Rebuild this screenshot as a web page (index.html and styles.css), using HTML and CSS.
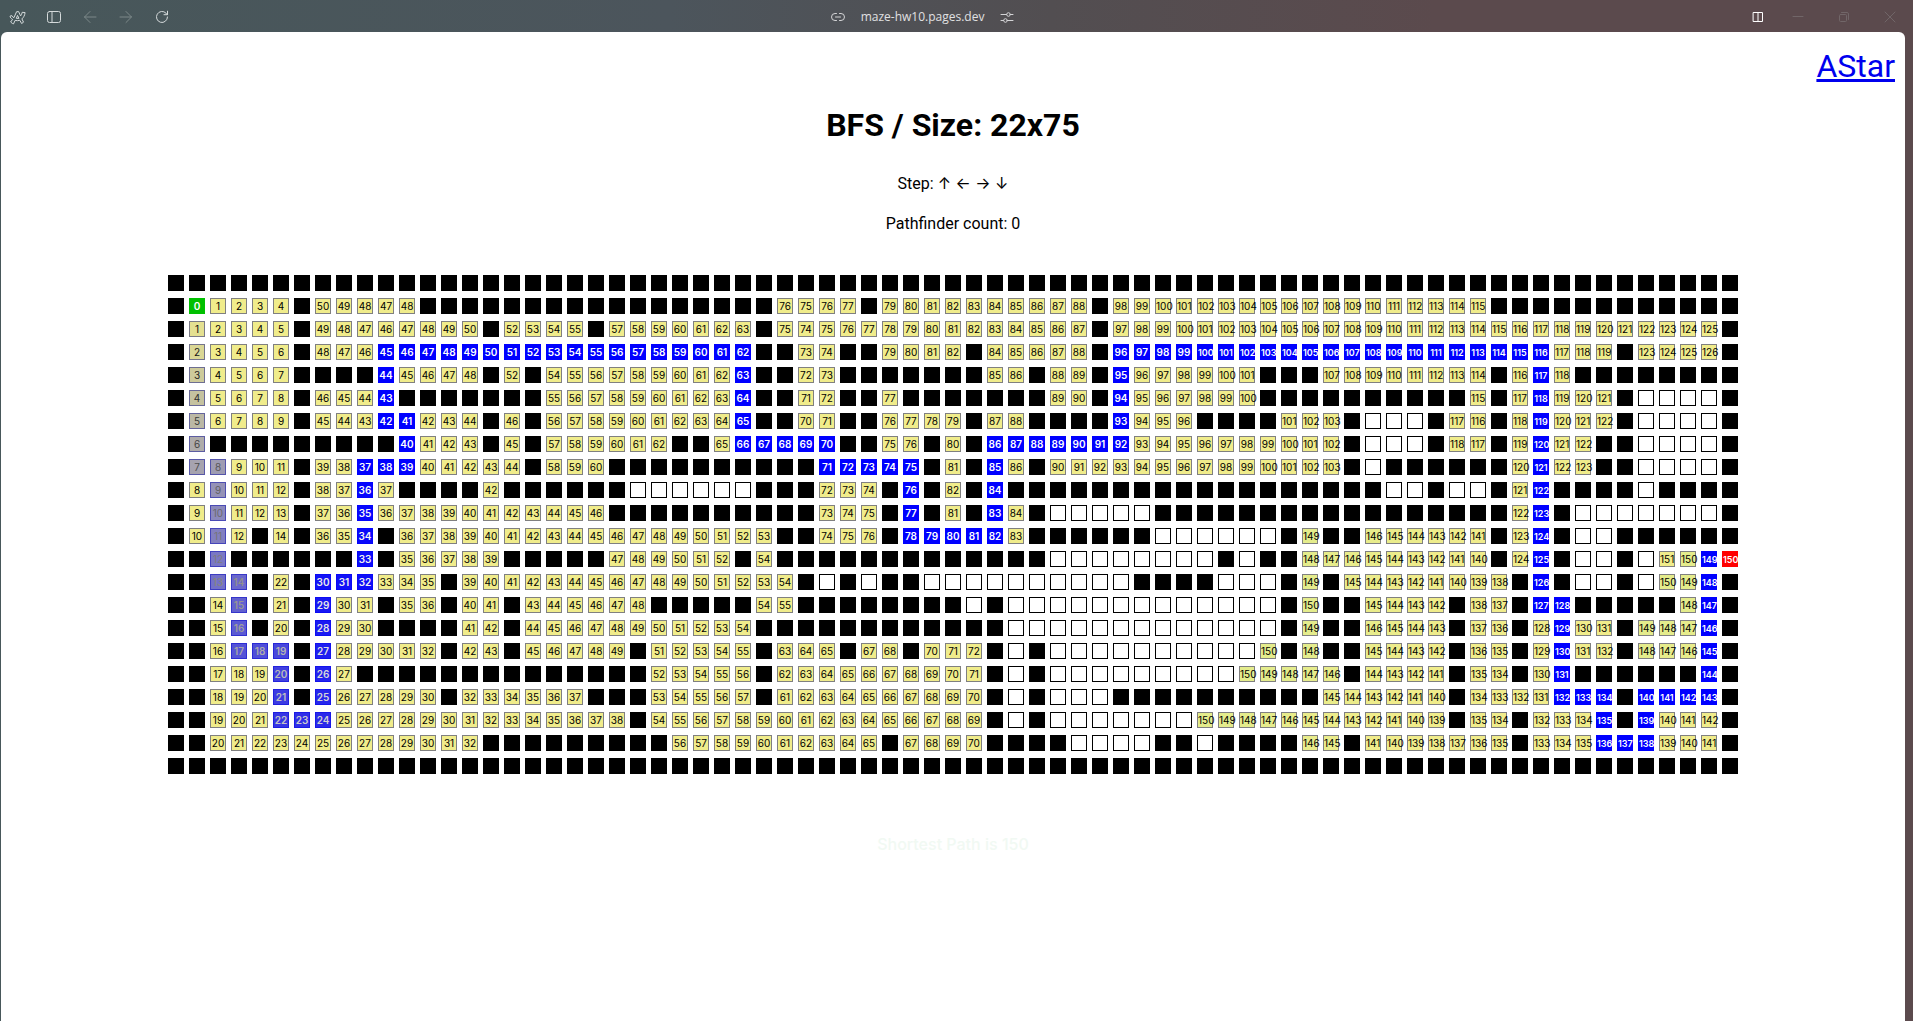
FILE: index.html
```html
<!DOCTYPE html>
<html lang="en">
<head>
<meta charset="utf-8">
<title>BFS Maze</title>
<link rel="stylesheet" href="styles.css">
</head>
<body>
<header class="bar">
  <div class="bar-left">
    <button class="tool" type="button" aria-label="Arc menu">
      <svg width="18" height="16" viewBox="0 0 18 16"><path d="M3.2 14.3 1.6 13l2-2.6C2.300 9.700 1.200 8.600 1 7.200l1.800-.6c.5 1 1.200 1.700 2.100 2.100L7.600 2.700l2-.1 2 4.300c.8-.8 1.300-2 1.600-3.600l2.900.3c-.4 2.800-1.500 4.900-3.200 6.300l1.600 3.300-1.900 1.300-1.800-3.200c-1.600.5-3.200.5-4.700.1L4.700 14.500zM7.500 9l1-2.600L9.800 9z"/></svg>
    </button>
    <button class="tool" type="button" aria-label="Toggle sidebar">
      <svg width="16" height="16" viewBox="0 0 16 16"><rect x="1.500" y="2.500" width="13" height="11" rx="2"/><path d="M6 2.500v11"/></svg>
    </button>
    <button class="tool faded" type="button" aria-label="Back">
      <svg width="16" height="16" viewBox="0 0 16 16"><path d="M14 8H2.500M8 2.500 2.500 8 8 13.500"/></svg>
    </button>
    <button class="tool faded" type="button" aria-label="Forward">
      <svg width="16" height="16" viewBox="0 0 16 16"><path d="M2 8h11.500M8 2.500 13.500 8 8 13.500"/></svg>
    </button>
    <button class="tool" type="button" aria-label="Reload">
      <svg width="16" height="16" viewBox="0 0 16 16"><path d="M13.500 8A5.500 5.500 0 1 1 12 4.200l1.500 1.500M13.500 2.200v3.500H10"/></svg>
    </button>
  </div>
  <div class="address">
    <svg width="14" height="14" viewBox="0 0 14 14"><path d="M5.500 3.500H4a3 3 0 0 0 0 7h1.500M8.500 3.500H10a3 3 0 0 1 0 7H8.500M4.500 7h5"/></svg>
    <span class="url">maze-hw10.pages.dev</span>
    <svg width="14" height="14" viewBox="0 0 14 14"><path d="M1 4.500h5.500M10.500 4.500H13M1 10.500h2.500M7.500 10.500H13"/><circle cx="8.500" cy="4.500" r="1.800"/><circle cx="5.500" cy="10.500" r="1.800"/></svg>
  </div>
  <div class="bar-right">
    <button class="tool split" type="button" aria-label="Split view">
      <svg width="12" height="12" viewBox="0 0 12 12"><rect x="1.500" y="1.500" width="9" height="9"/><path d="M6 1.500v9"/></svg>
    </button>
    <button class="tool window" type="button" aria-label="Minimize">
      <svg width="12" height="12" viewBox="0 0 12 12"><path d="M1 5.500h10"/></svg>
    </button>
    <button class="tool window" type="button" aria-label="Restore">
      <svg width="12" height="12" viewBox="0 0 12 12"><rect x="1.500" y="3.500" width="7" height="7" rx="1"/><path d="M3.500 1.500H9a1.500 1.500 0 0 1 1.500 1.500v5.500"/></svg>
    </button>
    <button class="tool window" type="button" aria-label="Close">
      <svg width="12" height="12" viewBox="0 0 12 12"><path d="m1 1 10 10M11 1 1 11"/></svg>
    </button>
  </div>
</header>
<main class="page">
  <nav class="nav"><a href="#astar">AStar</a></nav>
  <h1 class="title">BFS / Size: 22x75</h1>
  <p class="line">Step: <span class="arrows">↑ ← → ↓</span></p>
  <p class="line">Pathfinder count: 0</p>
  <div class="maze" id="maze"></div>
  <p class="line result">Shortest Path is 150</p>
</main>
<script src="maze.js"></script>
</body>
</html>
```
FILE: styles.css
```css
* {
  box-sizing: border-box;
}

body {
  margin: 0;
  min-height: 100vh;
  display: flex;
  flex-direction: column;
  background: linear-gradient(90deg, #47575a 0%, #4c555c 35%, #524e51 55%, #5b4a4d 75%, #5b4a4d 100%);
  font-family: Roboto, "Liberation Sans", sans-serif;
  color: #000;
}

.bar {
  display: grid;
  grid-template-columns: 1fr auto 1fr;
  align-items: center;
  height: 32px;
  padding-top: 2px;
}

.bar-left,
.bar-right,
.address {
  display: flex;
  align-items: center;
}

.bar-right {
  justify-content: flex-end;
}

.bar svg {
  display: block;
  fill: none;
  stroke: currentColor;
  stroke-linecap: round;
  stroke-linejoin: round;
}

.address {
  gap: 16px;
  padding-right: 68px;
  color: #d4d4d6;
}

.url {
  font: 12px/16px "Open Sans", "Noto Sans", sans-serif;
  color: #e0e0e2;
}

.tool {
  display: flex;
  align-items: center;
  justify-content: center;
  width: 36px;
  height: 30px;
  padding: 0;
  border: 0;
  background: none;
  color: #d5dadb;
}

.faded {
  color: #7c8889;
}

.split {
  width: 34px;
  color: #fff;
}

.window {
  width: 46px;
  color: #716668;
}

.page {
  flex: 1;
  margin: 0 8px 0 1px;
  padding: 10px 10px 0;
  border-radius: 6px 6px 0 0;
  background: #fff;
  text-align: center;
}

.nav {
  font-size: 32px;
  line-height: 48px;
  text-align: right;
}

.nav a {
  color: #00e;
}

.title {
  margin: 11px 0 23px;
  font-size: 32px;
  line-height: 48px;
}

.line {
  margin: 0 0 16px;
  font-size: 16px;
  line-height: 24px;
}

.arrows {
  font-family: Inter, sans-serif;
  line-height: 16px;
}

.maze {
  display: grid;
  grid-template-columns: repeat(75, 16px);
  justify-content: center;
  gap: 7px 5px;
  margin: 39px 0 58px;
}

.cell {
  height: 16px;
  border: 1px solid #000;
  font-family: Inter, sans-serif;
  font-size: 10px;
  line-height: 15px;
  white-space: nowrap;
}

.wall {
  background: #000;
}

.seen {
  border-color: #808080;
  background: color-mix(in srgb, #90ee90 calc(var(--fresh, 0) * 1%), #f0ec8b);
}

.path {
  border-color: color-mix(in srgb, #00f calc(var(--done) * 1%), #808080);
  background: color-mix(in srgb, #00f calc(var(--done) * 1%), #f0ec8b);
  color: color-mix(in srgb, #fff calc(var(--done) * 1%), #000);
}

.settled,
.start,
.goal {
  font-weight: 600;
}

.long {
  font-size: 9px;
}

.start {
  border-color: #00c000;
  background: #00c000;
  color: #fff;
}

.goal {
  border-color: #f00;
  background: #f00;
  color: #fff;
}

.result {
  font-family: Inter, sans-serif;
  font-weight: 500;
  color: #f1f9f3;
}
```
FILE: maze.js
```js
// Each row is a list of runs: "#n" walls, ".n" open cells, "a-b" visited
// distances, "*a-b" distances on the shortest path, "S" start and "G" goal.
const rows = [
  "#75",
  "# S0 1-4 # 50-47 48 #17 76 75-77 # 79-88 # 98-115 #12",
  "# *1 2-5 # 49-46 47-50 # 52-55 # 57-63 # 75 74-87 # 97-125 #",
  "# *2 3-6 # 48-46 *45-62 #2 73-74 #2 79-82 # 84-88 # *96-116 117-119 # 123-126 #",
  "# *3 4-7 #4 *44 45-48 # 52 # 54-62 *63 #2 72-73 #7 85-86 # 88-89 # *95 96-101 #3 107-114 # 116 *117 118 #8",
  "# *4 5-8 # 46-44 *43 #7 55-63 *64 #2 71-72 #2 77 #7 89-90 # *94 95-100 #10 115 # 117 *118 119-121 # .4 #",
  "# *5 6-9 # 45-43 *42-41 42-44 # 46 # 56-64 *65 #2 70-71 #2 76-79 # 87-88 #4 *93 94-96 #4 101-103 # .3 # 117-116 # 118 *119 120-122 # .4 #",
  "# *6 #9 *40 41-43 # 45 # 57-62 #2 65 *66-70 #2 75-76 # 80 # *86-92 93-102 # .3 # 118-117 # 119 *120 121-122 #2 .4 #",
  "# *7-8 9-11 # 39-38 *37-39 40-44 # 58-60 #10 *71-75 # 81 # *85 86 # 90-103 # . #6 120 *121 122-123 #2 .4 #",
  "# 8 *9 10-12 # 38-37 *36 37 #4 42 #6 .6 #3 72-74 # *76 # 82 # *84 #18 .2 # .2 # 121 *122 #4 . #4",
  "# 9 *10 11-13 # 37-36 *35 36-46 #10 73-75 # *77 # 81 # *83 84 # .5 #17 122 *123 # .7 #",
  "# 10 *11 12 # 14 # 36-35 *34 # 36-53 #2 74-76 # *78-82 83 #6 .6 # 149 #2 146-141 # 123 *124 # .2 #6",
  "#2 *12 #6 *33 # 35-39 #5 47-52 # 54 #13 .8 # . #2 148-140 # 124 *125 # .2 # . 151-150 *149 G150",
  "#2 *13-14 # 22 # *30-32 33-35 # 39-54 # . # . #2 .10 #4 .3 # 149 # 145-138 # *126 # .2 # . 150-149 *148 #",
  "#2 14 *15 # 21 # *29 30-31 # 35-36 # 40-41 # 43-48 #5 54-55 #8 . # .13 # 150 #2 145-142 # 138-137 # *127-128 #5 148 *147 #",
  "#2 15 *16 # 20 # *28 29-30 #4 41-42 # 44-54 #12 .13 # 149 #2 146-143 # 137-136 # 128 *129 130-131 # 149-147 *146 #",
  "#2 16 *17-19 # *27 28-32 # 42-43 # 45-49 # 51-55 # 63-65 # 67-68 # 70-72 # . # .10 150 # 148 #2 145-142 # 136-135 # 129 *130 131-132 # 148-146 *145 #",
  "#2 17-19 *20 # *26 27 #14 52-56 # 62-71 # . # .9 150-146 # 144-141 # 135-134 # 130 *131 #6 *144 #",
  "#2 18-20 *21 # *25 26-30 # 32-37 #3 53-57 # 61-70 # . # .3 #10 145-140 # 134-131 *132-134 # *140-143 #",
  "#2 19-21 *22-24 25-38 # 54-69 # . # .7 150-139 # 135-134 # 132-134 *135 # *139 140-142 #",
  "#2 20-32 #9 56-65 # 67-70 #4 .4 #2 . #4 146-145 # 141-135 # 133-135 *136-138 139-141 #",
  "#75"
];

const maze = document.getElementById("maze");

function addCell(kind, value) {
  const cell = document.createElement("div");
  cell.className = "cell " + kind;
  if (value !== undefined) cell.textContent = value;
  if (value > 99 && kind !== "seen") cell.classList.add("long");
  if (kind === "path") {
    const left = Math.max(0, 1 - value / 42);
    const done = value > 42 ? 100 : Math.round(100 * (1 - left * left));
    cell.style.setProperty("--done", done);
    if (done > 50) cell.classList.add("settled");
  }
  if (kind === "seen" && value > 142 && value < 151) {
    cell.style.setProperty("--fresh", Math.min(12, (value - 142) * 2));
  }
  maze.append(cell);
}

for (const row of rows) {
  for (const run of row.split(" ")) {
    if (run[0] === "#" || run[0] === ".") {
      const count = Number(run.slice(1)) || 1;
      for (let i = 0; i < count; i++) addCell(run[0] === "#" ? "wall" : "open");
      continue;
    }
    const kind = { "*": "path", S: "start", G: "goal" }[run[0]] || "seen";
    const [from, to = from] = run.replace(/^[*SG]/, "").split("-").map(Number);
    const step = to < from ? -1 : 1;
    for (let n = from; n !== to + step; n += step) addCell(kind, n);
  }
}
```
